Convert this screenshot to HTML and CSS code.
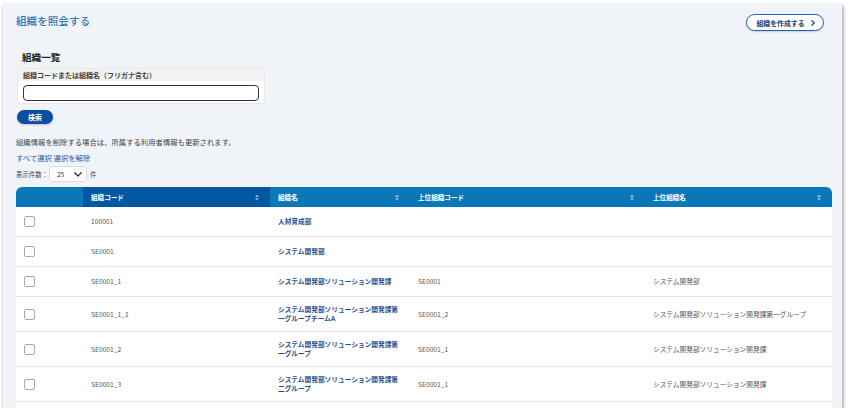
FILE: index.html
```html
<!DOCTYPE html>
<html lang="ja">
<head>
<meta charset="utf-8">
<title>組織を照会する</title>
<link rel="stylesheet" href="styles.css">
</head>
<body>
<div class="panel">
  <header class="page-head">
    <h1 class="page-title">組織を照会する</h1>
    <button class="btn-create" type="button">組織を作成する<svg class="chev-right" width="4" height="6" viewBox="0 0 4 6"><path d="M0.8 0.6 L3.2 3 L0.8 5.4" fill="none" stroke="currentColor" stroke-width="1.2" stroke-linecap="round" stroke-linejoin="round"/></svg></button>
  </header>

  <section class="search">
    <h2 class="section-title">組織一覧</h2>
    <div class="field-box">
      <div class="field-label">組織コードまたは組織名（フリガナ含む）</div>
      <div class="field-body"><input class="field-input" type="text"></div>
    </div>
    <button class="btn-search" type="button">検索</button>
  </section>

  <p class="notice">組織情報を削除する場合は、所属する利用者情報も更新されます。</p>
  <div class="select-links"><a href="#">すべて選択</a> <a href="#">選択を解除</a></div>
  <div class="perpage">
    <span>表示件数：</span>
    <div class="select"><span>25</span><svg width="8" height="5" viewBox="0 0 8 5"><path d="M0.8 0.8 L4 4 L7.2 0.8" fill="none" stroke="#333" stroke-width="1.3" stroke-linecap="round" stroke-linejoin="round"/></svg></div>
    <span class="unit">件</span>
  </div>

  <div class="grid">
    <div class="grid-head">
      <div class="th"></div>
      <div class="th sorted"><span>組織コード</span><svg class="sort" width="4" height="7" viewBox="0 0 4 7"><path d="M0 3 L2 0.5 L4 3 Z M0 4 L2 6.5 L4 4 Z"/></svg></div>
      <div class="th"><span>組織名</span><svg class="sort" width="4" height="7" viewBox="0 0 4 7"><path d="M0 3 L2 0.5 L4 3 Z M0 4 L2 6.5 L4 4 Z"/></svg></div>
      <div class="th"><span>上位組織コード</span><svg class="sort" width="4" height="7" viewBox="0 0 4 7"><path d="M0 3 L2 0.5 L4 3 Z M0 4 L2 6.5 L4 4 Z"/></svg></div>
      <div class="th"><span>上位組織名</span><svg class="sort" width="4" height="7" viewBox="0 0 4 7"><path d="M0 3 L2 0.5 L4 3 Z M0 4 L2 6.5 L4 4 Z"/></svg></div>
    </div>
    <div class="row">
      <div class="td"><input class="check" type="checkbox"></div>
      <div class="td">100001</div>
      <div class="td name">人材育成部</div>
      <div class="td"></div>
      <div class="td"></div>
    </div>
    <div class="row">
      <div class="td"><input class="check" type="checkbox"></div>
      <div class="td">SE0001</div>
      <div class="td name">システム開発部</div>
      <div class="td"></div>
      <div class="td"></div>
    </div>
    <div class="row">
      <div class="td"><input class="check" type="checkbox"></div>
      <div class="td">SE0001_1</div>
      <div class="td name">システム開発部ソリューション開発課</div>
      <div class="td">SE0001</div>
      <div class="td">システム開発部</div>
    </div>
    <div class="row">
      <div class="td"><input class="check" type="checkbox"></div>
      <div class="td">SE0001_1_1</div>
      <div class="td name">システム開発部ソリューション開発課第一グループチームA</div>
      <div class="td">SE0001_2</div>
      <div class="td">システム開発部ソリューション開発課第一グループ</div>
    </div>
    <div class="row">
      <div class="td"><input class="check" type="checkbox"></div>
      <div class="td">SE0001_2</div>
      <div class="td name">システム開発部ソリューション開発課第一グループ</div>
      <div class="td">SE0001_1</div>
      <div class="td">システム開発部ソリューション開発課</div>
    </div>
    <div class="row">
      <div class="td"><input class="check" type="checkbox"></div>
      <div class="td">SE0001_3</div>
      <div class="td name">システム開発部ソリューション開発課第二グループ</div>
      <div class="td">SE0001_1</div>
      <div class="td">システム開発部ソリューション開発課</div>
    </div>
    <div class="row row-partial"></div>
  </div>
</div>
</body>
</html>
```

FILE: styles.css
```css
* { box-sizing: border-box; }

html, body {
  margin: 0;
  background: #ffffff;
}

body {
  font-family: "Noto Sans CJK JP", "Noto Sans", sans-serif;
  color: #333;
}

.panel {
  margin: 4px 0 0 3px;
  width: 839px;
  height: 404px;
  background: #f0f4f8;
  box-shadow: 1px 2px 4px rgba(0, 0, 0, 0.45);
  overflow: hidden;
  padding: 10px 10px 0 13px;
}

.page-head {
  display: flex;
  justify-content: space-between;
  align-items: flex-start;
  padding-right: 8px;
}

.page-title {
  margin: 0;
  font-size: 10.6px;
  line-height: 14px;
  font-weight: 500;
  color: #3177b6;
}

.btn-create {
  height: 17px;
  width: 78px;
  border: 1.5px solid #1f5fae;
  border-radius: 9px;
  background: #fff;
  font-family: inherit;
  font-size: 6.9px;
  font-weight: 700;
  color: #23416e;
  display: flex;
  align-items: center;
  justify-content: center;
  gap: 6px;
  padding: 0 0 0 1px;
  box-shadow: 0 1px 2px rgba(0, 0, 0, 0.15);
}

.search {
  display: flex;
  flex-direction: column;
  align-items: flex-start;
}

.section-title {
  margin: 19px 0 4px 6px;
  font-size: 9.6px;
  line-height: 14px;
  font-weight: 700;
  color: #222;
}

.field-box {
  width: 248px;
  margin-left: 1px;
  border: 1px solid #e6e8ea;
  border-radius: 3px;
  background: #fff;
  overflow: hidden;
}

.field-label {
  height: 12px;
  line-height: 12px;
  background: #f2f2f2;
  padding-left: 5px;
  font-size: 7px;
  font-weight: 700;
  color: #444;
}

.field-body {
  padding: 4px 5px 2px;
}

.field-input {
  display: block;
  width: 100%;
  height: 16px;
  border: 1.5px solid #333;
  border-radius: 4px;
  background: #fff;
  margin: 0;
}

.btn-search {
  margin: 6px 0 0 1px;
  width: 36px;
  height: 14px;
  border: 0;
  border-radius: 7px;
  background: #0b4ea2;
  color: #fff;
  font-family: inherit;
  font-size: 7px;
  font-weight: 700;
  padding: 0;
  box-shadow: 0 1px 2px rgba(0, 0, 0, 0.2);
}

.notice {
  margin: 13px 0 0;
  font-size: 7.35px;
  line-height: 10px;
  color: #444;
}

.select-links {
  margin-top: 6px;
  font-size: 7.35px;
  line-height: 10px;
}

.select-links a {
  color: #1d57a5;
  text-decoration: none;
}

.perpage {
  margin-top: 3px;
  display: flex;
  align-items: center;
  font-size: 6.4px;
  color: #444;
}

.select {
  margin-left: 1px;
  width: 38px;
  height: 16px;
  border: 1px solid #dcdcdc;
  border-radius: 4px;
  background: #fff;
  display: flex;
  align-items: center;
  justify-content: space-between;
  padding: 0 4px 0 7px;
  font-size: 6.6px;
  color: #333;
}

.unit {
  margin-left: 3px;
}

.grid {
  margin-top: 5px;
  width: 816px;
  background: #fff;
  border-radius: 6px 6px 0 0;
  overflow: hidden;
}

.grid-head,
.row {
  display: grid;
  grid-template-columns: 67px 187px 140px 235px 187px;
}

.grid-head {
  height: 20px;
  background: #0a77b9;
  color: #fff;
  font-size: 6.6px;
  font-weight: 700;
}

.th {
  display: flex;
  align-items: center;
  justify-content: space-between;
  padding: 0 11px 0 8px;
}

.th.sorted {
  background: #0058a3;
}

.sort {
  fill: rgba(255, 255, 255, 0.55);
}

.row {
  min-height: 30px;
  align-items: center;
  border-bottom: 1px solid #e8e8e8;
  font-size: 6.7px;
  line-height: 9px;
  color: #555;
}

.td {
  padding: 8px 8px;
}

.td.name {
  color: #24508e;
  font-weight: 700;
}

.check {
  appearance: none;
  -webkit-appearance: none;
  display: block;
  margin: 0;
  width: 11px;
  height: 11px;
  border: 1px solid #a8a8a8;
  border-radius: 2px;
  background: #fff;
}
```
